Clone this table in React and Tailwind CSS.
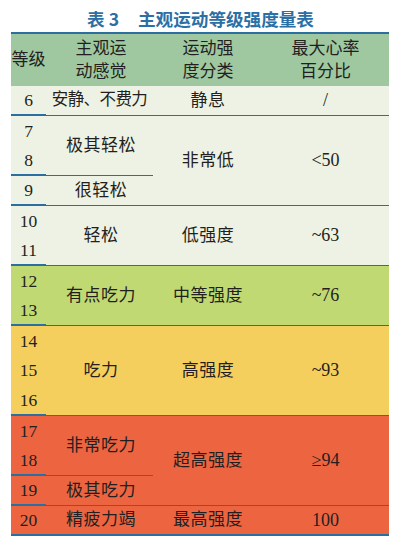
const font = { fontFamily: '"Liberation Serif", "Noto Sans CJK SC", serif' };

const BG = {
  head: 'bg-[#9fc8a1]',
  light: 'bg-[#eef2e4]',
  lime: 'bg-[#c1d972]',
  yellow: 'bg-[#f5cf5e]',
  red: 'bg-[#ec6540]',
};

// col1 groups: [row start, numbers, bg, last]
const numGroups = [
  { start: 2, nums: [6], bg: BG.light },
  { start: 3, nums: [7, 8], bg: BG.light },
  { start: 5, nums: [9], bg: BG.light },
  { start: 6, nums: [10, 11], bg: BG.light },
  { start: 8, nums: [12, 13], bg: BG.lime },
  { start: 10, nums: [14, 15, 16], bg: BG.yellow },
  { start: 13, nums: [17, 18], bg: BG.red },
  { start: 15, nums: [19], bg: BG.red },
  { start: 16, nums: [20], bg: BG.red, last: true },
];

const feelGroups = [
  { start: 2, span: 1, text: '安静、不费力', bg: BG.light },
  { start: 3, span: 2, text: '极其轻松', bg: BG.light },
  { start: 5, span: 1, text: '很轻松', bg: BG.light },
  { start: 6, span: 2, text: '轻松', bg: BG.light },
  { start: 8, span: 2, text: '有点吃力', bg: BG.lime },
  { start: 10, span: 3, text: '吃力', bg: BG.yellow },
  { start: 13, span: 2, text: '非常吃力', bg: BG.red },
  { start: 15, span: 1, text: '极其吃力', bg: BG.red },
  { start: 16, span: 1, text: '精疲力竭', bg: BG.red, last: true },
];

const intensity = [
  { start: 2, span: 1, type: '静息', hr: '/', bg: BG.light },
  { start: 3, span: 3, type: '非常低', hr: '<50', bg: BG.light },
  { start: 6, span: 2, type: '低强度', hr: '~63', bg: BG.light },
  { start: 8, span: 2, type: '中等强度', hr: '~76', bg: BG.lime },
  { start: 10, span: 3, type: '高强度', hr: '~93', bg: BG.yellow },
  { start: 13, span: 3, type: '超高强度', hr: '≥94', bg: BG.red },
  { start: 16, span: 1, type: '最高强度', hr: '100', bg: BG.red, last: true },
];

const rowStart = {
  2: 'row-start-2', 3: 'row-start-3', 5: 'row-start-5', 6: 'row-start-6', 8: 'row-start-8',
  10: 'row-start-10', 13: 'row-start-13', 15: 'row-start-15', 16: 'row-start-16',
};
const rowSpan = { 1: 'row-span-1', 2: 'row-span-2', 3: 'row-span-3' };

const App = () => {
  return (
    <div className="w-[401px] h-[545px] bg-white text-[#231f20]" style={font}>
      <div
        className="flex justify-center pt-[10px] pb-[4px] text-[17.6px] leading-[18px] font-bold text-[#2c6fa5]"
        style={{ fontFamily: '"Noto Sans CJK SC", "Liberation Sans", sans-serif' }}
      >
        <span>表</span>
        <span className="ml-[4px]">3</span>
        <span className="ml-[19px]">主观运动等级强度量表</span>
      </div>

      <div className="mx-[11px] w-[378px] border-t-2 border-[#2b6fa0] grid grid-cols-[35px_107px_112px_124px] grid-rows-[52px_repeat(15,30px)] text-[17px]">
        {/* header */}
        <div className={`${BG.head} row-start-1 col-start-1 flex items-center justify-center`}>等级</div>
        <div className={`${BG.head} row-start-1 col-start-2 flex flex-col items-center justify-center leading-[23px] pl-[3px]`}>
          <span>主观运</span>
          <span>动感觉</span>
        </div>
        <div className={`${BG.head} row-start-1 col-start-3 flex flex-col items-center justify-center leading-[23px] pr-[2px]`}>
          <span>运动强</span>
          <span>度分类</span>
        </div>
        <div className={`${BG.head} row-start-1 col-start-4 flex flex-col items-center justify-center leading-[23px] pr-[3px]`}>
          <span>最大心率</span>
          <span>百分比</span>
        </div>

        {numGroups.map((g) => (
          <div
            key={g.start}
            className={`${g.bg} col-start-1 ${rowStart[g.start]} ${rowSpan[g.nums.length]} border-b-2 border-[#2b6fa0] flex flex-col`}
          >
            {g.nums.map((n) => (
              <div key={n} className="h-[30px] flex items-center justify-center pt-[1px] text-[17.5px]">
                {n}
              </div>
            ))}
          </div>
        ))}

        {feelGroups.map((g) => (
          <div
            key={g.start}
            className={`${g.bg} col-start-2 ${rowStart[g.start]} ${rowSpan[g.span]} ${g.last ? 'border-b-2' : 'border-b'} border-[#2b6fa0] flex items-center justify-center whitespace-nowrap ${g.text.length > 5 ? 'tracking-[-0.6px] text-[16.5px]' : 'pl-[3px] tracking-[0.5px]'}`}
          >
            {g.text}
          </div>
        ))}

        {intensity.map((g) => (
          <div
            key={`t${g.start}`}
            className={`${g.bg} col-start-3 ${rowStart[g.start]} ${rowSpan[g.span]} ${g.last ? 'border-b-2' : 'border-b'} border-[#2b6fa0] flex items-center justify-center pr-[2px] tracking-[0.5px] whitespace-nowrap`}
          >
            {g.type}
          </div>
        ))}

        {intensity.map((g) => (
          <div
            key={`h${g.start}`}
            className={`${g.bg} col-start-4 ${rowStart[g.start]} ${rowSpan[g.span]} ${g.last ? 'border-b-2' : 'border-b'} border-[#2b6fa0] flex items-center justify-center pr-[3px] text-[18px]`}
          >
            {g.hr}
          </div>
        ))}
      </div>
    </div>
  );
};

export default App;
